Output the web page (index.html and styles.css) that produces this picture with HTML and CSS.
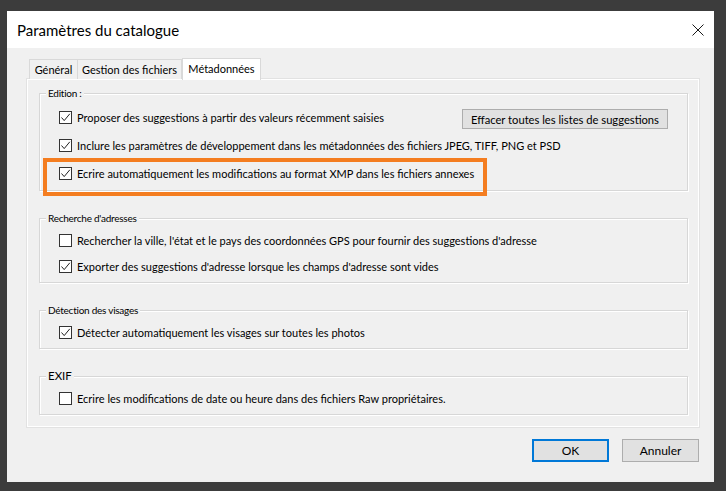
FILE: index.html
```html
<!DOCTYPE html>
<html lang="fr">
<head>
<meta charset="utf-8">
<title>Paramètres du catalogue</title>
<link rel="stylesheet" href="styles.css">
</head>
<body>
<div class="dialog">
  <div class="titlebar">
    <span class="title">Paramètres du catalogue</span>
    <svg class="close" width="12" height="12" viewBox="0 0 12 12"><path d="M0.5 0.5 L11.5 11.5 M11.5 0.5 L0.5 11.5" stroke="#1a1a1a" stroke-width="1" fill="none"/></svg>
  </div>
  <div class="body">
    <div class="tabs">
      <div class="tab tab-general">Général</div>
      <div class="tab tab-files">Gestion des fichiers</div>
      <div class="tab tab-meta selected">Métadonnées</div>
    </div>
    <div class="panel">
      <fieldset class="group group-edition">
        <legend>Edition :</legend>
        <div class="rows">
          <div class="row">
            <span class="cb checked"><svg viewBox="0 0 11 11" width="11" height="11"><path d="M1.5 5.5 L4.2 8.6 L9.8 1.8" stroke="#222" stroke-width="1" fill="none"/></svg></span>
            <span class="label">Proposer des suggestions à partir des valeurs récemment saisies</span>
            <button class="btn btn-clear">Effacer toutes les listes de suggestions</button>
          </div>
          <div class="row">
            <span class="cb checked"><svg viewBox="0 0 11 11" width="11" height="11"><path d="M1.5 5.5 L4.2 8.6 L9.8 1.8" stroke="#222" stroke-width="1" fill="none"/></svg></span>
            <span class="label">Inclure les paramètres de développement dans les métadonnées des fichiers JPEG, TIFF, PNG et PSD</span>
          </div>
          <div class="row highlighted">
            <span class="cb checked"><svg viewBox="0 0 11 11" width="11" height="11"><path d="M1.5 5.5 L4.2 8.6 L9.8 1.8" stroke="#222" stroke-width="1" fill="none"/></svg></span>
            <span class="label">Ecrire automatiquement les modifications au format XMP dans les fichiers annexes</span>
          </div>
        </div>
      </fieldset>
      <fieldset class="group">
        <legend>Recherche d'adresses</legend>
        <div class="rows">
          <div class="row">
            <span class="cb"></span>
            <span class="label">Rechercher la ville, l'état et le pays des coordonnées GPS pour fournir des suggestions d'adresse</span>
          </div>
          <div class="row">
            <span class="cb checked"><svg viewBox="0 0 11 11" width="11" height="11"><path d="M1.5 5.5 L4.2 8.6 L9.8 1.8" stroke="#222" stroke-width="1" fill="none"/></svg></span>
            <span class="label">Exporter des suggestions d'adresse lorsque les champs d'adresse sont vides</span>
          </div>
        </div>
      </fieldset>
      <fieldset class="group">
        <legend>Détection des visages</legend>
        <div class="rows">
          <div class="row">
            <span class="cb checked"><svg viewBox="0 0 11 11" width="11" height="11"><path d="M1.5 5.5 L4.2 8.6 L9.8 1.8" stroke="#222" stroke-width="1" fill="none"/></svg></span>
            <span class="label">Détecter automatiquement les visages sur toutes les photos</span>
          </div>
        </div>
      </fieldset>
      <fieldset class="group group-exif">
        <legend class="legend-exif">EXIF</legend>
        <div class="rows">
          <div class="row">
            <span class="cb"></span>
            <span class="label">Ecrire les modifications de date ou heure dans des fichiers Raw propriétaires.</span>
          </div>
        </div>
      </fieldset>
    </div>
    <div class="actions">
      <button class="btn btn-action btn-default">OK</button>
      <button class="btn btn-action">Annuler</button>
    </div>
  </div>
</div>
</body>
</html>
```
FILE: styles.css
```css
html, body {
  margin: 0;
  padding: 0;
}
body {
  background: #3c3c3c;
  width: 726px;
  height: 491px;
  overflow: hidden;
  font-family: Lato, "Noto Sans", sans-serif;
  color: #000;
}
.dialog {
  margin: 11px 0 0 7px;
  width: 707px;
  height: 471px;
  background: #f0f0f0;
  display: flex;
  flex-direction: column;
}
.titlebar {
  height: 37px;
  background: #fff;
  display: flex;
  align-items: center;
  justify-content: space-between;
  padding: 0 10px 0 10px;
  flex: none;
}
.title {
  font-size: 15px;
  padding-top: 1px;
}
.close {
  display: block;
}
.body {
  padding: 10px 0 0 20px;
}
.tabs {
  display: flex;
  align-items: flex-end;
  height: 21px;
  padding-left: 2px;
  position: relative;
  z-index: 1;
}
.tab {
  height: 20px;
  box-sizing: border-box;
  border: 1px solid #d9d9d9;
  border-bottom: none;
  font-size: 11px;
  line-height: 19px;
  text-align: center;
  white-space: nowrap;
  background: #f0f0f0;
}
.tab-general { width: 49px; }
.tab-files { width: 104px; border-left: none; }
.tab-meta { width: 79px; }
.tab.selected {
  height: 22px;
  margin-bottom: -1px;
  background: #fff;
  line-height: 20px;
  padding-bottom: 1px;
}
.panel {
  width: 672px;
  height: 348px;
  box-sizing: border-box;
  border: 1px solid #fff;
  box-shadow: 0 0 0 1px #e2e2e2;
  padding: 6px 10px 0 11px;
  display: flex;
  flex-direction: column;
  gap: 20px;
}
.group {
  margin: 0;
  padding: 0;
  min-width: 0;
  border: 1px solid #d7d7d7;
  box-shadow: inset 1px 1px 0 #fff, 1px 1px 0 #fff;
}
.group legend {
  margin-left: 6px;
  padding: 0 2px;
  font-size: 10px;
  line-height: 14px;
  letter-spacing: -0.25px;
  background: #f0f0f0;
}
.group legend.legend-exif {
  font-size: 11.5px;
  letter-spacing: 0;
}
.rows {
  padding: 2px 19px 3px 19px;
}
.group-edition .rows {
  padding-top: 3px;
}
.row {
  height: 26px;
  display: flex;
  align-items: center;
  font-size: 11px;
}
.group-edition .row {
  height: 28px;
}
.cb {
  width: 13px;
  height: 13px;
  box-sizing: border-box;
  border: 1px solid #333;
  background: #fff;
  flex: none;
  margin-right: 5px;
  display: flex;
  align-items: center;
  justify-content: center;
}
.cb svg {
  display: block;
}
.label {
  white-space: nowrap;
}
.btn {
  font-family: Lato, "Noto Sans", sans-serif;
  font-size: 11.2px;
  color: #000;
  background: #e1e1e1;
  border: 1px solid #adadad;
  padding: 0;
  margin: 0;
}
.btn-clear {
  margin-left: auto;
  margin-top: 4px;
  width: 206px;
  height: 20px;
}
.highlighted {
  position: relative;
}
.highlighted::after {
  content: "";
  position: absolute;
  left: -16px;
  top: -1px;
  width: 444px;
  height: 38px;
  box-sizing: border-box;
  border: 4px solid #f47d20;
  pointer-events: none;
}
.actions {
  display: flex;
  justify-content: flex-end;
  gap: 13px;
  padding: 12px 15px 0 0;
}
.btn-action {
  width: 77px;
  height: 23px;
  font-size: 12px;
}
.btn-default {
  border: 2px solid #0078d7;
}
```
